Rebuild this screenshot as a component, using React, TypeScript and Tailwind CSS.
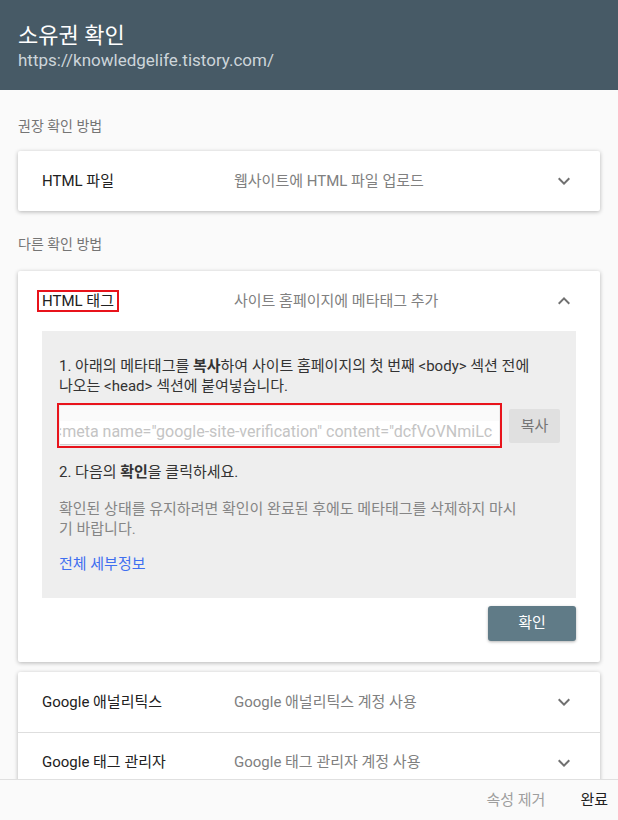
import React from "react";

const font = { fontFamily: "Roboto, 'Noto Sans CJK KR', sans-serif" };

function Chevron({ up = false }: { up?: boolean }) {
  return (
    <svg width="24" height="24" viewBox="0 0 24 24" className={up ? "rotate-180" : ""}>
      <path d="M16.59 8.59L12 13.17 7.41 8.59 6 10l6 6 6-6z" fill="#707070" />
    </svg>
  );
}

function MethodRow({ title, desc, divider = false }: { title: string; desc: string; divider?: boolean }) {
  return (
    <div className={`flex h-[60px] items-center pl-[24px] pr-[24px] ${divider ? "border-t border-[#dedede]" : ""}`}>
      <div className="w-[192px] text-[15px] text-[#212121]">{title}</div>
      <div className="flex-1 text-[15px] text-[#808080]">{desc}</div>
      <Chevron />
    </div>
  );
}

export default function App() {
  return (
    <div style={font} className="flex h-[820px] w-[618px] flex-col overflow-hidden bg-[#fafafa]">
      <header className="h-[90px] shrink-0 bg-[#475a66] px-[18px] pt-[21px]">
        <div className="text-[22px] leading-[30px] text-white">소유권 확인</div>
        <div className="-mt-[1px] text-[17px] leading-[20px] text-[#cdd5da]">https://knowledgelife.tistory.com/</div>
      </header>

      <main className="flex-1 overflow-hidden px-[18px]">
        <div className="mt-[26px] text-[14px] leading-[20px] text-[#757575]">권장 확인 방법</div>
        <div className="mt-[15px] rounded-[2px] bg-white shadow-[0_1px_4px_rgba(0,0,0,0.28)]">
          <MethodRow title="HTML 파일" desc="웹사이트에 HTML 파일 업로드" />
        </div>

        <div className="mt-[23px] text-[14px] leading-[20px] text-[#757575]">다른 확인 방법</div>
        <div className="mt-[17px] rounded-[2px] bg-white shadow-[0_1px_4px_rgba(0,0,0,0.28)]">
          <div className="flex h-[60px] items-center px-[24px]">
            <div className="w-[192px]">
              <span className="-ml-[5px] inline-block border-2 border-[#e8131b] px-[3px] text-[15px] leading-[18px] text-[#212121]">
                HTML 태그
              </span>
            </div>
            <div className="flex-1 text-[15px] text-[#808080]">사이트 홈페이지에 메타태그 추가</div>
            <Chevron up />
          </div>

          <div className="mx-[24px] bg-[#eeeeee] pb-[24px] pl-[17px] pr-[16px] pt-[25px] text-[15px] leading-[20px] text-[#333333]">
            <div className="whitespace-nowrap">1. 아래의 메타태그를 <b className="font-bold">복사</b>하여 사이트 홈페이지의 첫 번째 &lt;body&gt; 섹션 전에</div>
            <div className="whitespace-nowrap">나오는 &lt;head&gt; 섹션에 붙여넣습니다.</div>

            <div className="mt-[7px] flex items-center gap-[7px]">
              <div className="-ml-[2px] border-2 border-[#e8131b] p-[1px]">
                <div className="flex h-[39px] w-[439px] items-end overflow-hidden border-b border-[#d0d0d0] bg-[#fafafa]">
                  <div className="w-full overflow-hidden bg-white pb-[2px]">
                    <div className="-ml-[6px] whitespace-nowrap text-[16px] leading-[21px] text-[#c4c4c4]">
                      &lt;meta name="google-site-verification" content="dcfVoVNmiLc
                    </div>
                  </div>
                </div>
              </div>
              <div className="flex h-[34px] w-[55px] items-center justify-center rounded-[2px] bg-[#e0e0e0] text-[15px] text-[#757575]">
                복사
              </div>
            </div>

            <div className="mt-[14px]">2. 다음의 <b className="font-bold">확인</b>을 클릭하세요.</div>

            <div className="mt-[17px] text-[#858585]">
              <div className="whitespace-nowrap">확인된 상태를 유지하려면 확인이 완료된 후에도 메타태그를 삭제하지 마시</div>
              <div>기 바랍니다.</div>
            </div>

            <div className="mt-[15px] text-[#3f6ff0]">전체 세부정보</div>
          </div>

          <div className="flex justify-end px-[24px] pb-[21px] pt-[8px]">
            <div className="flex h-[35px] w-[88px] items-center justify-center rounded-[3px] bg-[#607b87] text-[15px] text-white shadow-[0_1px_3px_rgba(0,0,0,0.3)]">
              확인
            </div>
          </div>
        </div>

        <div className="mt-[10px] rounded-[2px] bg-white shadow-[0_1px_4px_rgba(0,0,0,0.28)]">
          <MethodRow title="Google 애널리틱스" desc="Google 애널리틱스 계정 사용" />
          <MethodRow title="Google 태그 관리자" desc="Google 태그 관리자 계정 사용" divider />
        </div>
      </main>

      <footer className="flex h-[41px] shrink-0 items-center justify-end gap-[35px] border-t border-[#e0e0e0] bg-[#fafafa] pr-[10px] text-[15px]">
        <span className="text-[#9e9e9e]">속성 제거</span>
        <span className="text-[#212121]">완료</span>
      </footer>
    </div>
  );
}
